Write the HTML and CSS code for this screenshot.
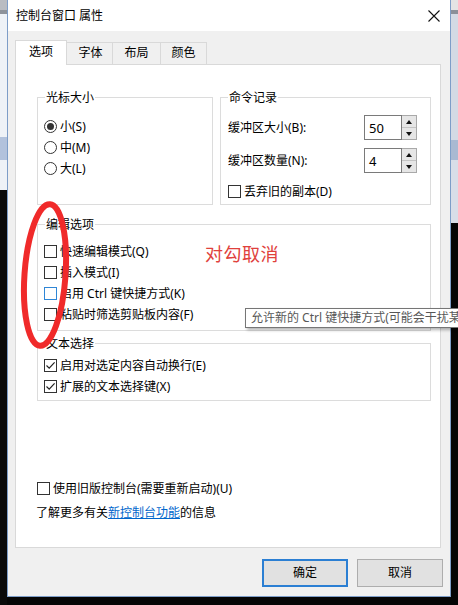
FILE: index.html
```html
<!DOCTYPE html>
<html lang="zh-CN">
<head>
<meta charset="utf-8">
<title>控制台窗口 属性</title>
<link rel="stylesheet" href="styles.css">
</head>
<body>
<div class="window">
  <div class="titlebar">
    <span class="title">控制台窗口 属性</span>
    <svg class="close" width="12" height="12" viewBox="0 0 12 12"><path d="M0.5 0.5 L11.5 11.5 M11.5 0.5 L0.5 11.5" stroke="#111" stroke-width="1.1" fill="none"/></svg>
  </div>
  <div class="body">
    <div class="tabs">
      <div class="tab active">选项</div>
      <div class="tab t2">字体</div>
      <div class="tab t3">布局</div>
      <div class="tab t4">颜色</div>
    </div>
    <div class="panel">
      <div class="toprow">
        <div class="group cursor">
          <div class="legend">光标大小</div>
          <div class="opt"><span class="radio on"></span>小(S)</div>
          <div class="opt"><span class="radio"></span>中(M)</div>
          <div class="opt"><span class="radio"></span>大(L)</div>
        </div>
        <div class="group history">
          <div class="legend">命令记录</div>
          <div class="field">
            <span class="flabel">缓冲区大小(B):</span>
            <span class="input">50</span>
            <span class="spin"><span class="up"></span><span class="down"></span></span>
          </div>
          <div class="field second">
            <span class="flabel">缓冲区数量(N):</span>
            <span class="input">4</span>
            <span class="spin"><span class="up"></span><span class="down"></span></span>
          </div>
          <div class="opt discard"><span class="check"></span>丢弃旧的副本(D)</div>
        </div>
      </div>
      <div class="group edit">
        <div class="legend">编辑选项</div>
        <div class="opt"><span class="check"></span>快速编辑模式(Q)</div>
        <div class="opt"><span class="check"></span>插入模式(I)</div>
        <div class="opt"><span class="check hover"></span>启用 Ctrl 键快捷方式(K)</div>
        <div class="opt"><span class="check"></span>粘贴时筛选剪贴板内容(F)</div>
      </div>
      <div class="group select">
        <div class="legend">文本选择</div>
        <div class="opt"><span class="check"><svg width="11" height="11" viewBox="0 0 11 11"><path d="M1.5 5.5 L4.2 8.2 L9.6 2.3" stroke="#222" stroke-width="1.2" fill="none"/></svg></span>启用对选定内容自动换行(E)</div>
        <div class="opt"><span class="check"><svg width="11" height="11" viewBox="0 0 11 11"><path d="M1.5 5.5 L4.2 8.2 L9.6 2.3" stroke="#222" stroke-width="1.2" fill="none"/></svg></span>扩展的文本选择键(X)</div>
      </div>
      <div class="opt flat legacy"><span class="check"></span>使用旧版控制台(需要重新启动)(U)</div>
      <div class="learn">了解更多有关<span class="link">新控制台功能</span>的信息</div>
    </div>
    <div class="buttons">
      <div class="btn default">确定</div>
      <div class="btn">取消</div>
    </div>
  </div>
</div>

<svg class="circle-mark" width="60" height="165" viewBox="0 0 60 165">
  <ellipse cx="30" cy="80" rx="20.5" ry="71" transform="rotate(4 30 80)" fill="none" stroke="#f02a2a" stroke-width="6"/>
</svg>
<div class="note">对勾取消</div>
<div class="tooltip">允许新的 Ctrl 键快捷方式(可能会干扰某些应用程序)</div>
</body>
</html>
```

FILE: styles.css
```css
html, body {
  margin: 0;
  padding: 0;
}
body {
  width: 458px;
  height: 605px;
  overflow: hidden;
  position: relative;
  font-family: "Noto Sans", "Noto Sans CJK SC", sans-serif;
  font-size: 12px;
  color: #000;
  background:
    linear-gradient(to bottom, #b9bcc2 0, #b9bcc2 10px, #8e939b 10px, #8e939b 14px, #eef2f7 14px, #eef2f7 137px, #b2c2dc 137px, #b2c2dc 160px, #eef2f7 160px, #eef2f7 190px, #0a0a0a 190px) left top / 7px 100% no-repeat,
    linear-gradient(to bottom, #e4e4e4 0, #e4e4e4 10px, #8b9099 10px, #8b9099 14px, #d3dae4 14px, #d3dae4 140px, #a9b9d2 140px, #a9b9d2 160px, #d8dee8 160px, #d8dee8 223px, #050505 223px) right top / 7px 100% no-repeat,
    #050505;
}

.window {
  box-sizing: border-box;
  margin-left: 7px;
  width: 444px;
  height: 597px;
  border: 1px solid #7d9dc8;
  border-top: none;
  background: #f0f0f0;
}

.titlebar {
  height: 31px;
  background: #fff;
  display: flex;
  align-items: center;
  justify-content: space-between;
  padding: 0 10px 0 8px;
}
.title {
  line-height: 16px;
}
.close {
  display: block;
}

.body {
  padding-top: 9px;
}

.tabs {
  display: flex;
  align-items: flex-end;
  height: 24px;
  margin-left: 7px;
}
.tab {
  box-sizing: border-box;
  height: 22px;
  border: 1px solid #d9d9d9;
  border-bottom: none;
  background: #f0f0f0;
  display: flex;
  align-items: center;
  justify-content: center;
  margin-left: -1px;
  line-height: 16px;
  padding-bottom: 1px;
}
.tab.active {
  margin-left: 0;
  height: 25px;
  width: 52px;
  margin-bottom: -1px;
  background: #fff;
  position: relative;
  z-index: 1;
  padding-bottom: 3px;
}
.tab.t2 { width: 47px; padding-left: 2px; }
.tab.t3 { width: 49px; }
.tab.t4 { width: 47px; }

.panel {
  box-sizing: border-box;
  margin-left: 7px;
  width: 426px;
  height: 484px;
  border: 1px solid #d9d9d9;
  background: #fff;
  padding: 32px 9px 0 21px;
}

.toprow {
  display: flex;
  gap: 7px;
}

.group {
  box-sizing: border-box;
  border: 1px solid #dcdcdc;
}
.legend {
  display: table;
  margin: -8px 0 0 7px;
  padding: 0 1px;
  line-height: 16px;
  background: #fff;
}

.cursor {
  width: 176px;
  height: 108px;
}
.cursor .legend { margin-bottom: 10px; }

.history {
  width: 211px;
  height: 108px;
}
.history .legend { margin-bottom: 9px; }

.opt {
  display: flex;
  align-items: center;
  height: 21px;
  padding-left: 6px;
  line-height: 16px;
}
.opt.flat {
  padding-left: 0;
}

.radio {
  box-sizing: border-box;
  width: 13px;
  height: 13px;
  border: 1px solid #333;
  border-radius: 50%;
  margin-right: 3px;
  display: flex;
  align-items: center;
  justify-content: center;
  background: #fff;
}
.radio.on::after {
  content: "";
  width: 7px;
  height: 7px;
  border-radius: 50%;
  background: #333;
}

.check {
  box-sizing: border-box;
  width: 13px;
  height: 13px;
  border: 1px solid #333;
  background: #fff;
  margin-right: 3px;
  display: flex;
  align-items: center;
  justify-content: center;
}
.check svg {
  display: block;
}
.check.hover {
  border-color: #2f86d6;
}

.field {
  display: flex;
  align-items: center;
  height: 25px;
  padding: 0 13px 0 7px;
}
.field.second {
  margin-top: 8px;
}
.flabel {
  flex: 1;
  line-height: 16px;
}
.input {
  box-sizing: border-box;
  width: 38px;
  height: 25px;
  border: 1px solid #7a7a7a;
  background: #fff;
  padding-left: 4px;
  display: flex;
  align-items: center;
  font-size: 13px;
}
.spin {
  box-sizing: border-box;
  width: 15px;
  height: 25px;
  border: 1px solid #a9a9a9;
  border-left: none;
  background: #e6e6e6;
  display: flex;
  flex-direction: column;
}
.spin .up, .spin .down {
  flex: 1;
  display: flex;
  align-items: center;
  justify-content: center;
}
.spin .up {
  border-bottom: 1px solid #c4c4c4;
}
.spin .up::after {
  content: "";
  border-left: 3.5px solid transparent;
  border-right: 3.5px solid transparent;
  border-bottom: 4px solid #111;
}
.spin .down::after {
  content: "";
  border-left: 3.5px solid transparent;
  border-right: 3.5px solid transparent;
  border-top: 4px solid #111;
}

.discard {
  margin-top: 8px;
  padding-left: 7px;
}

.edit {
  margin-top: 19px;
  height: 107px;
}
.edit .legend { margin-bottom: 8px; }

.select {
  margin-top: 12px;
  height: 58px;
}
.select .legend { margin-bottom: 3px; }

.legacy {
  margin-top: 77px;
}
.learn {
  margin: 3px 0 0 -1px;
  height: 21px;
  line-height: 21px;
}
.link {
  color: #0066cc;
  text-decoration: underline;
}

.buttons {
  display: flex;
  justify-content: flex-end;
  gap: 9px;
  margin-top: 11px;
  padding-right: 7px;
}
.btn {
  box-sizing: border-box;
  width: 86px;
  height: 28px;
  border: 1px solid #adadad;
  background: #e1e1e1;
  display: flex;
  align-items: center;
  justify-content: center;
  line-height: 16px;
}
.btn.default {
  border: 2px solid #2b7fd3;
}

.circle-mark {
  position: absolute;
  left: 15px;
  top: 195px;
  pointer-events: none;
}
.note {
  position: absolute;
  left: 205px;
  top: 243px;
  font-size: 18px;
  line-height: 22px;
  color: #e0413c;
  letter-spacing: 0.5px;
}
.tooltip {
  position: absolute;
  left: 245px;
  top: 308px;
  box-sizing: border-box;
  width: 213px;
  height: 20px;
  padding: 0 0 0 5px;
  border: 1px solid #767676;
  border-right: none;
  overflow: hidden;
  background: #fff;
  color: #575757;
  white-space: nowrap;
  line-height: 18px;
  box-shadow: 2px 2px 3px rgba(0, 0, 0, 0.3);
}
```
